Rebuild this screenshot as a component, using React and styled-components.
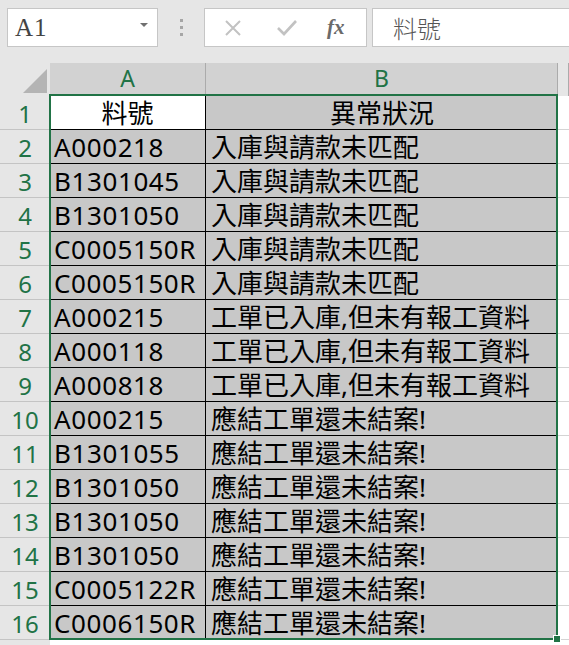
import React from "react";
import styled, { createGlobalStyle } from "styled-components";

const GlobalStyle = createGlobalStyle`
  html, body {
    margin: 0;
    padding: 0;
    background: #ffffff;
    overflow: hidden;
  }
  body {
    font-family: "Noto Sans", "Noto Sans CJK TC", sans-serif;
  }
`;

const GREEN = "#217346";
const CELL_FONT = `"Noto Sans", "Noto Sans CJK TC", sans-serif`;

const Toolbar = styled.div`
  display: flex;
  align-items: flex-start;
  height: 63px;
  padding-top: 8px;
  box-sizing: border-box;
  background: #e6e6e6;
`;

const NameBox = styled.div`
  margin-left: 7px;
  width: 151px;
  height: 39px;
  box-sizing: border-box;
  border: 1px solid #c6c6c6;
  background: #ffffff;
  display: flex;
  align-items: center;
  justify-content: space-between;
  padding: 0 9px 0 7px;
  span {
    font-family: "Liberation Serif", "DejaVu Serif", serif;
    font-size: 25px;
    color: #444444;
    letter-spacing: 1px;
  }
`;

const Caret = styled.div`
  width: 0;
  height: 0;
  border-left: 4px solid transparent;
  border-right: 4px solid transparent;
  border-top: 4px solid #707070;
  margin-top: -6px;
`;

const Dots = styled.div`
  width: 46px;
  height: 39px;
  display: flex;
  flex-direction: column;
  align-items: center;
  justify-content: center;
  gap: 4px;
  i {
    width: 3px;
    height: 3px;
    background: #a6a6a6;
  }
`;

const FormulaButtons = styled.div`
  width: 163px;
  height: 39px;
  box-sizing: border-box;
  border: 1px solid #c6c6c6;
  background: #ffffff;
  display: flex;
  align-items: center;
  padding: 0 0 0 18px;
  gap: 33px;
`;

const Fx = styled.span`
  font-family: "Liberation Serif", "DejaVu Serif", serif;
  font-style: italic;
  font-weight: bold;
  font-size: 21px;
  color: #6a6a6a;
  margin-left: -4px;
`;

const FormulaInput = styled.div`
  margin-left: 5px;
  flex: 1;
  height: 39px;
  box-sizing: border-box;
  border: 1px solid #c6c6c6;
  border-right: none;
  background: #ffffff;
  display: flex;
  align-items: center;
  padding-left: 20px;
  font-family: "Noto Sans CJK TC", sans-serif;
  font-weight: 300;
  font-size: 24px;
  color: #555555;
`;

const Sheet = styled.div`
  position: relative;
  display: grid;
  grid-template-columns: 50px 156px 352px 1fr;
  grid-template-rows: 33px;
  grid-auto-rows: 34px;
  background: #e6e6e6;
`;

const Corner = styled.div`
  position: relative;
  background: #e6e6e6;
  &::after {
    content: "";
    position: absolute;
    right: 3px;
    bottom: 3px;
    width: 0;
    height: 0;
    border-left: 24px solid transparent;
    border-bottom: 24px solid #b4b4b4;
  }
`;

const ColHeader = styled.div`
  box-sizing: border-box;
  background: ${(p) => (p.$empty ? "#e6e6e6" : "#d2d2d2")};
  border-right: 1px solid #ababab;
  border-bottom: ${(p) => (p.$empty ? "none" : `2px solid ${GREEN}`)};
  display: flex;
  align-items: center;
  justify-content: center;
  line-height: 1;
  font-family: "Noto Sans", sans-serif;
  font-size: 23px;
  color: ${GREEN};
`;

const RowHeader = styled.div`
  box-sizing: border-box;
  background: #e6e6e6;
  border-bottom: 1px solid #c4c4c4;
  display: flex;
  align-items: center;
  justify-content: center;
  line-height: 1;
  padding-top: 2px;
  font-family: "Noto Sans", sans-serif;
  font-size: 24px;
  color: ${GREEN};
`;

const Cell = styled.div`
  box-sizing: border-box;
  background: ${(p) => (p.$white ? "#ffffff" : "#c8c8c8")};
  border-bottom: 1px solid #000000;
  border-right: ${(p) => (p.$divider ? "1px solid #000000" : "none")};
  display: flex;
  align-items: center;
  justify-content: ${(p) => (p.$center ? "center" : "flex-start")};
  padding: 1px 0 0 ${(p) => (p.$center ? "0" : p.$pad)};
  line-height: 1.1;
  font-family: ${CELL_FONT};
  font-size: 26px;
  letter-spacing: ${(p) => (p.$latin ? "0.6px" : "0")};
  color: #000000;
  white-space: nowrap;
`;

const EmptyCell = styled.div`
  background: #ffffff;
  border-bottom: 1px solid #d4d4d4;
  box-sizing: border-box;
`;

const Selection = styled.div`
  position: absolute;
  left: 49px;
  top: 31px;
  width: 509px;
  height: 546px;
  box-sizing: border-box;
  border: 2px solid ${GREEN};
  pointer-events: none;
`;

const FillHandle = styled.div`
  position: absolute;
  right: -5px;
  bottom: -5px;
  width: 6px;
  height: 6px;
  background: ${GREEN};
  border: 1px solid #ffffff;
`;

const rows = [
  ["A000218", "入庫與請款未匹配"],
  ["B1301045", "入庫與請款未匹配"],
  ["B1301050", "入庫與請款未匹配"],
  ["C0005150R", "入庫與請款未匹配"],
  ["C0005150R", "入庫與請款未匹配"],
  ["A000215", "工單已入庫,但未有報工資料"],
  ["A000118", "工單已入庫,但未有報工資料"],
  ["A000818", "工單已入庫,但未有報工資料"],
  ["A000215", "應結工單還未結案!"],
  ["B1301055", "應結工單還未結案!"],
  ["B1301050", "應結工單還未結案!"],
  ["B1301050", "應結工單還未結案!"],
  ["B1301050", "應結工單還未結案!"],
  ["C0005122R", "應結工單還未結案!"],
  ["C0006150R", "應結工單還未結案!"],
];

function CancelIcon() {
  return (
    <svg width="20" height="20" viewBox="0 0 20 20">
      <path d="M3 3 L17 17 M17 3 L3 17" stroke="#c2c2c2" strokeWidth="2" fill="none" />
    </svg>
  );
}

function CheckIcon() {
  return (
    <svg width="22" height="20" viewBox="0 0 22 20">
      <path d="M2 10 L8 16 L20 3" stroke="#c2c2c2" strokeWidth="2.6" fill="none" />
    </svg>
  );
}

export default function App() {
  return (
    <>
      <GlobalStyle />
      <Toolbar>
        <NameBox>
          <span>A1</span>
          <Caret />
        </NameBox>
        <Dots>
          <i />
          <i />
          <i />
        </Dots>
        <FormulaButtons>
          <CancelIcon />
          <CheckIcon />
          <Fx>fx</Fx>
        </FormulaButtons>
        <FormulaInput>料號</FormulaInput>
      </Toolbar>
      <Sheet>
        <Corner />
        <ColHeader>A</ColHeader>
        <ColHeader>B</ColHeader>
        <ColHeader $empty />

        <RowHeader>1</RowHeader>
        <Cell $white $divider $center>
          料號
        </Cell>
        <Cell $center>異常狀況</Cell>
        <EmptyCell />

        {rows.map((row, index) => (
          <React.Fragment key={index}>
            <RowHeader>{index + 2}</RowHeader>
            <Cell $divider $latin $pad="4px">
              {row[0]}
            </Cell>
            <Cell $pad="5px">{row[1]}</Cell>
            <EmptyCell />
          </React.Fragment>
        ))}

        <RowHeader />
        <EmptyCell />
        <EmptyCell />
        <EmptyCell />

        <Selection>
          <FillHandle />
        </Selection>
      </Sheet>
    </>
  );
}
